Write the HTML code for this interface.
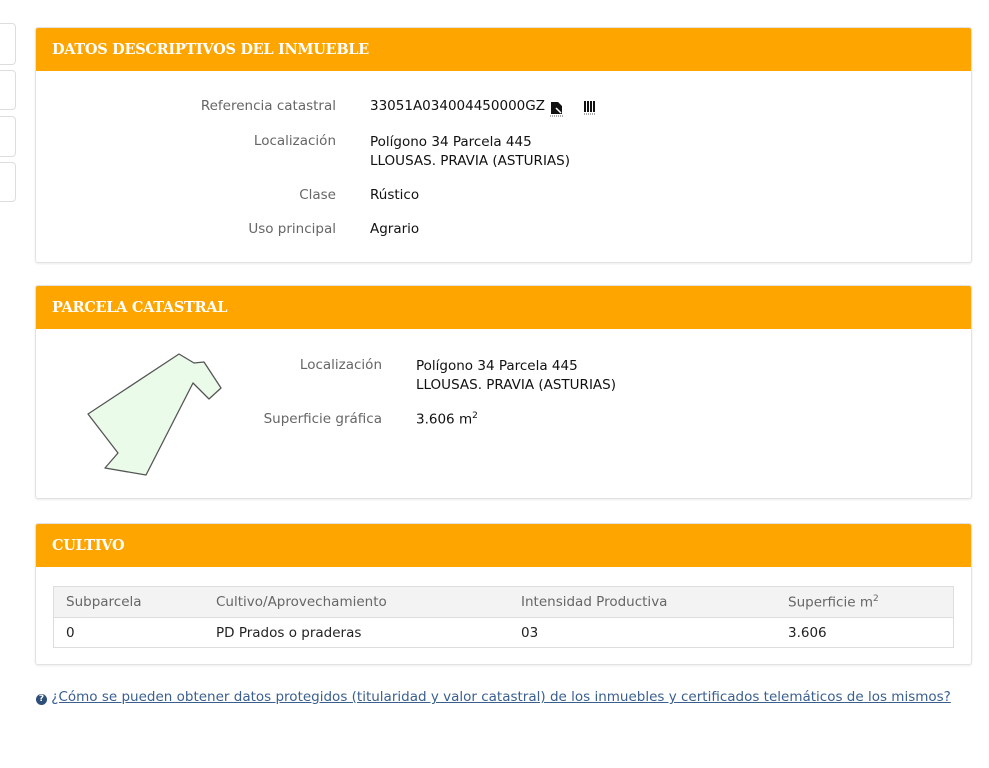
<!DOCTYPE html>
<html><head><meta charset="utf-8"><style>
body{margin:0;width:989px;height:768px;background:#fff;font-family:"DejaVu Sans","Liberation Sans",sans-serif;font-size:13.5px;color:#222;position:relative;overflow:hidden}
.tab{position:absolute;left:-6px;width:20px;border:1px solid #ddd;border-radius:4px;background:#fff}
.panel{position:absolute;left:35px;width:935px;border:1px solid #e2e2e2;border-radius:3px;box-shadow:0 1px 2px rgba(0,0,0,.08);background:#fff}
.hd{background:#ffa500;height:43px;color:#fff;font-weight:bold;font-size:14.5px;line-height:44px;padding-left:16px;border-radius:2px 2px 0 0;font-family:"DejaVu Serif","Liberation Serif",serif;letter-spacing:-0.3px}
.l{position:absolute;color:#666;text-align:right}
.v{position:absolute;color:#111}
table{position:absolute;left:17px;top:62px;width:901px;border-collapse:collapse;border:1px solid #ddd}
td{height:29px;padding:0 0 0 12px;border-bottom:1px solid #ddd}
tr.h td{background:#f3f3f3;color:#666;height:30px}
</style></head><body>
<div class="tab" style="top:23px;height:40px"></div>
<div class="tab" style="top:70px;height:38px"></div>
<div class="tab" style="top:116px;height:39px"></div>
<div class="tab" style="top:162px;height:38px"></div>

<div class="panel" style="top:27px;height:234px">
<div class="hd">DATOS DESCRIPTIVOS DEL INMUEBLE</div>
<div class="l" style="right:635px;top:70px">Referencia catastral</div>
<div class="v" style="left:334px;top:70px;white-space:nowrap">33051A034004450000GZ</div>
<svg style="position:absolute;left:514px;top:71px" width="70" height="18"><path d="M1 3h7l4 4v8H1z" fill="#111"/><path d="M6 9l5 5" stroke="#fff" stroke-width="1.5"/><path d="M35 2v11M38 2v11M41 2v11M44 2v11" stroke="#111" stroke-width="2"/><path d="M34 15h11" stroke="#555" stroke-width="1" stroke-dasharray="1 1"/><path d="M0 17h13" stroke="#555" stroke-width="1" stroke-dasharray="1 1"/></svg>
<div class="l" style="right:635px;top:105px">Localización</div>
<div class="v" style="left:334px;top:105px;line-height:19px">Polígono 34 Parcela 445<br>LLOUSAS. PRAVIA (ASTURIAS)</div>
<div class="l" style="right:635px;top:159px">Clase</div>
<div class="v" style="left:334px;top:159px">Rústico</div>
<div class="l" style="right:635px;top:193px">Uso principal</div>
<div class="v" style="left:334px;top:193px">Agrario</div>
</div>

<div class="panel" style="top:285px;height:212px">
<div class="hd">PARCELA CATASTRAL</div>
<svg style="position:absolute;left:-35px;top:-285px" width="300" height="500"><polygon points="178,353 193,362 203,361 220,387 208,398 192,382 145,474 104,467 117,452 87,413" fill="#eafbea" stroke="#555" stroke-width="1.3" stroke-linejoin="round"/></svg>
<div class="l" style="right:589px;top:71px">Localización</div>
<div class="v" style="left:380px;top:71px;line-height:19px">Polígono 34 Parcela 445<br>LLOUSAS. PRAVIA (ASTURIAS)</div>
<div class="l" style="right:589px;top:125px">Superficie gráfica</div>
<div class="v" style="left:380px;top:125px">3.606 m<sup style="font-size:9px">2</sup></div>
</div>

<div class="panel" style="top:523px;height:140px">
<div class="hd">CULTIVO</div>
<table>
<tr class="h"><td style="width:138px">Subparcela</td><td style="width:293px">Cultivo/Aprovechamiento</td><td style="width:255px">Intensidad Productiva</td><td>Superficie m<sup style="font-size:9px">2</sup></td></tr>
<tr><td>0</td><td>PD Prados o praderas</td><td>03</td><td>3.606</td></tr>
</table>
</div>

<div style="position:absolute;left:36px;top:689px;color:#3a5f8f;font-size:13.5px;white-space:nowrap"><span style="display:inline-block;width:11px;height:11px;border-radius:50%;background:#2d4f7a;color:#fff;font-size:9px;line-height:11px;text-align:center;font-weight:bold;vertical-align:0">?</span> <span style="text-decoration:underline">¿Cómo se pueden obtener datos protegidos (titularidad y valor catastral) de los inmuebles y certificados telemáticos de los mismos?</span></div>
</body></html>
